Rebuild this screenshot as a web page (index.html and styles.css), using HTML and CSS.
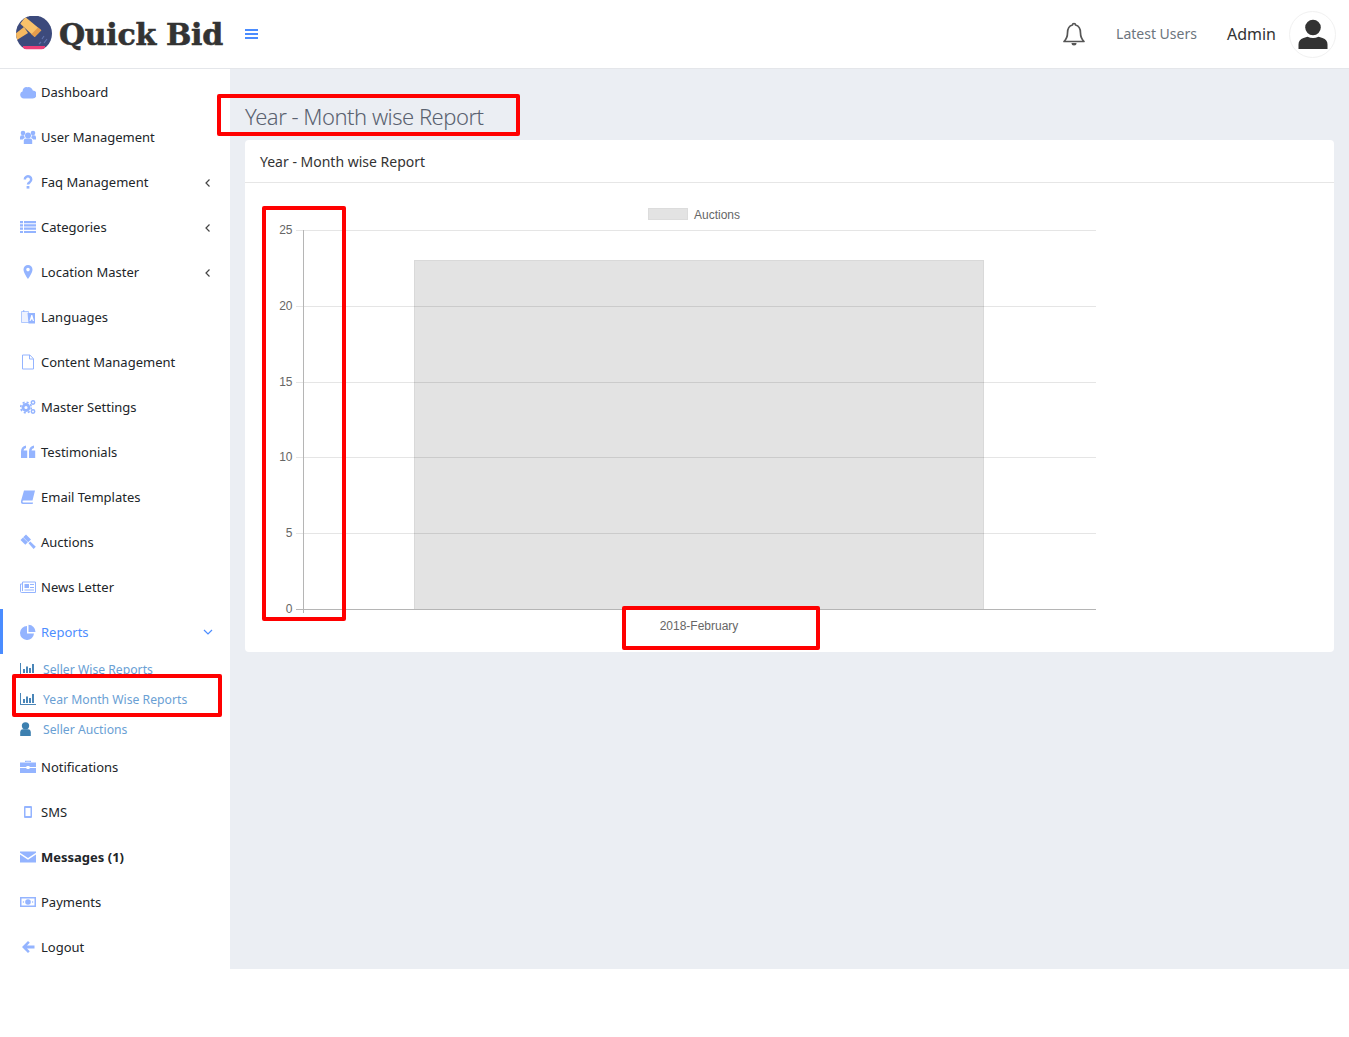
FILE: index.html
```html
<!DOCTYPE html>
<html lang="en">
<head>
    <meta charset="UTF-8">
    <title>Year - Month wise Report</title>
    <link rel="stylesheet" href="styles.css">
</head>
<body>
    <svg class="icon-defs" width="0" height="0">
        <symbol id="i-cloud" viewBox="0 0 16 16"><path d="M3.800 14.500a3.700 3.700 0 0 1-1.100-7.200A3.700 3.700 0 0 1 7.400 3.200 4.300 4.300 0 0 1 12.800 6.500 4 4 0 0 1 12.200 14.500z"/></symbol>
        <symbol id="i-users" viewBox="0 0 16 16"><circle cx="8" cy="6.500" r="3"/><circle cx="3" cy="4" r="2.300"/><circle cx="13" cy="4" r="2.300"/><path d="M3.800 15v-3.600Q3.800 9.500 6 9.500h4q2.200 0 2.200 1.900V15z"/><path d="M0 10.500V8.300q0-2 2-2h2.300a4 4 0 0 0 .5 2.600Q3 9.600 2.800 10.500zM16 10.500V8.300q0-2-2-2h-2.300a4 4 0 0 1-.5 2.600q1.800.7 2 1.600z"/></symbol>
        <symbol id="i-question" viewBox="0 0 16 16"><path d="M4.800 5.500a3.200 3.200 0 1 1 4.900 2.700C8.500 9 8 9.400 8 10.500" fill="none" stroke="currentColor" stroke-width="2.500"/><rect x="6.600" y="12" width="2.800" height="2.600"/></symbol>
        <symbol id="i-list" viewBox="0 0 16 16"><path d="M0 2h3v2.200H0zM4 2h12v2.200H4zM0 5.300h3v2.200H0zM4 5.300h12v2.200H4zM0 8.600h3v2.200H0zM4 8.600h12v2.200H4zM0 11.900h3v2.200H0zM4 11.900h12v2.200H4z"/></symbol>
        <symbol id="i-pin" viewBox="0 0 16 16"><path fill-rule="evenodd" d="M8 1a4.500 4.500 0 0 0-4.500 4.500C3.500 9 8 15 8 15s4.500-6 4.500-9.500A4.500 4.500 0 0 0 8 1zm0 2.800a1.800 1.800 0 1 1 0 3.600 1.800 1.800 0 0 1 0-3.600z"/></symbol>
        <symbol id="i-language" viewBox="0 0 16 16"><path d="M1.500 2.500h7l1 11h-8z" fill="#eef2ff" stroke="currentColor" stroke-width=".7"/><path d="M7.500 4H15v10.500H8.500z"/><path d="M9.500 12l1.800-6h1l1.700 6h-1.200l-.4-1.500h-1.400l-.4 1.500z" fill="#fff"/><path d="M3 1l2 1-2 1z"/></symbol>
        <symbol id="i-file" viewBox="0 0 16 16"><path d="M2.500 1h7.300l3.700 3.700V15h-11z M9.500 1v4h4" fill="none" stroke="currentColor" stroke-width="1"/></symbol>
        <symbol id="i-cogs" viewBox="0 0 16 16"><circle cx="6" cy="8.500" r="3" fill="none" stroke="currentColor" stroke-width="2.800"/><circle cx="6" cy="8.500" r="5.300" fill="none" stroke="currentColor" stroke-width="1.600" stroke-dasharray="2.100 2.060"/><circle cx="13" cy="3.500" r="1.700" fill="none" stroke="currentColor" stroke-width="1.500"/><circle cx="13" cy="12.500" r="1.700" fill="none" stroke="currentColor" stroke-width="1.500"/></symbol>
        <symbol id="i-quote" viewBox="0 0 16 16"><path d="M1 7.500Q1 2.500 6 1.500V4Q3.500 4.500 3.500 6.500H7.200V14H1zM9 7.500q0-5 5-6V4q-2.500.5-2.500 2.500h3.700V14H9z"/></symbol>
        <symbol id="i-book" viewBox="0 0 16 16"><path d="M4 1.500h11l-2.500 10H3.500q-1 0-1 1t1 1h9.500l-.3 1.500H3q-2.500 0-2-3z"/></symbol>
        <symbol id="i-gavel" viewBox="0 0 16 16"><path d="M6 .5l5 5-2.800 2.800-5-5zM8.500 9.200l1.800-1.800 5.500 5.300-2.200 2.200z"/><path d="M.5 6L3 3.500l4.800 4.800-2.500 2.500z"/></symbol>
        <symbol id="i-news" viewBox="0 0 16 16"><path d="M2.500 3h13v10.500H1.500Q.500 13.500.500 12.500V5h2zM2.500 3v9" fill="none" stroke="currentColor" stroke-width="1"/><path d="M4.500 5h4.500v4H4.500zM10 5h4v1h-4zM10 8h4v1h-4zM4.500 10.500H14v1H4.500z"/></symbol>
        <symbol id="i-pie" viewBox="0 0 16 16"><path d="M7 2a7 7 0 1 0 7 7.500H7z"/><path d="M8.500 .8A7 7 0 0 1 15.500 8H8.500z"/></symbol>
        <symbol id="i-bars" viewBox="0 0 16 16"><path d="M0 2h1v11h15v1H0z"/><path d="M3 8h2v4H3zM6 5.500h2V12H6zM9 7h2v5H9zM12 3h2v9h-2z"/></symbol>
        <symbol id="i-user" viewBox="2.500 .5 11 14.500"><circle cx="8" cy="4.500" r="3.800"/><path d="M2.500 15v-3.500q0-3.500 3-3.500h5q3 0 3 3.500V15z"/></symbol>
        <symbol id="i-case" viewBox="0 0 16 16"><path d="M5 3V1.800h6V3h-1.200v-.2H6.200V3z"/><path d="M0 3.500h16V8H9.500v-1h-3v1H0zM0 9h6.500v1h3V9H16v5H0z"/></symbol>
        <symbol id="i-mobile" viewBox="0 0 16 16"><path fill-rule="evenodd" d="M5 2h6q1 0 1 1v10q0 1-1 1H5q-1 0-1-1V3q0-1 1-1zm.5 2v8h5V4z"/></symbol>
        <symbol id="i-mail" viewBox="0 0 16 16"><path d="M0 2.500h16v1.200L8 9 0 3.700zM0 5.500L8 10.700 16 5.500V13.500H0z"/></symbol>
        <symbol id="i-money" viewBox="0 0 16 16"><path fill-rule="evenodd" d="M0 3h16v10H0zm1.500 1.500v7h13v-7z"/><circle cx="8" cy="8" r="2.800"/><circle cx="3.400" cy="8" r=".7"/><circle cx="12.600" cy="8" r=".7"/></symbol>
        <symbol id="i-back" viewBox="0 0 16 16"><path d="M8 2l1.800 1.800L7 6.500h7.500v3H7l2.800 2.700L8 14 2 8z"/></symbol>
    </svg>

    <div class="page">
        <header class="topbar">
            <a class="brand">
                <svg class="brand-logo" viewBox="0 0 36 36" width="36" height="36">
                    <clipPath id="logo-clip"><circle cx="18" cy="17.500" r="18"/></clipPath>
                    <g clip-path="url(#logo-clip)">
                        <rect width="36" height="33" fill="#3c4a7c"/>
                        <rect x="7" y="30" width="22" height="3.500" fill="#ec3f78"/>
                        <rect y="33.500" width="36" height="3" fill="#fff"/>
                        <path d="M28 20l-2 3M31 23l-3 4M25 26l-2 2" stroke="#5f71ad" stroke-width="1.200" fill="none"/>
                        <path d="M8 11l4 6L1 24l-2-6z" fill="#f5b860"/>
                        <path d="M9.300 1l16 13.300-6.600 6.700L4.300 7.700z" fill="#f9c26a"/>
                        <path d="M22 11.400l3.300 2.900-6.600 6.700-3.400-2.800z" fill="#e59c4c"/>
                    </g>
                </svg>
                <span class="brand-name">Quick Bid</span>
            </a>
            <div class="burger"><span></span><span></span><span></span></div>
            <div class="topbar-right">
                <svg class="bell" viewBox="0 0 24 26" width="24" height="26">
                    <path d="M12 2.500a1.500 1.500 0 0 1 1.500 1.500c4 1 5 4 5 8 0 4 1 6 3.500 8.500H2C4.500 18 5.500 16 5.500 12c0-4 1-7 5-8A1.500 1.500 0 0 1 12 2.500z" fill="none" stroke="#555" stroke-width="1.700" stroke-linejoin="round"/>
                    <path d="M9.500 22a2.500 2.500 0 0 0 5 0z" fill="#555"/>
                </svg>
                <a class="latest">Latest Users</a>
                <span class="admin">Admin</span>
                <div class="avatar">
                    <svg viewBox="0 0 32 32" width="32" height="32">
                        <circle cx="16" cy="9.500" r="7.800" fill="#333"/>
                        <path d="M1.500 31v-4.500q0-5 5-6.500l4-1.300q5.500 2.600 11 0l4 1.300q5 1.500 5 6.500V31z" fill="#333"/>
                    </svg>
                </div>
            </div>
        </header>

        <div class="layout">
            <nav class="sidebar">
                <ul class="menu">
                    <li class="menu-item"><svg class="ico"><use href="#i-cloud"/></svg>Dashboard</li>
                    <li class="menu-item"><svg class="ico"><use href="#i-users"/></svg>User Management</li>
                    <li class="menu-item"><svg class="ico"><use href="#i-question"/></svg>Faq Management<svg class="caret" viewBox="0 0 8 10"><path d="M5.500 1.500L2 5l3.500 3.500"/></svg></li>
                    <li class="menu-item"><svg class="ico"><use href="#i-list"/></svg>Categories<svg class="caret" viewBox="0 0 8 10"><path d="M5.500 1.500L2 5l3.500 3.500"/></svg></li>
                    <li class="menu-item"><svg class="ico"><use href="#i-pin"/></svg>Location Master<svg class="caret" viewBox="0 0 8 10"><path d="M5.500 1.500L2 5l3.500 3.500"/></svg></li>
                    <li class="menu-item"><svg class="ico"><use href="#i-language"/></svg>Languages</li>
                    <li class="menu-item"><svg class="ico"><use href="#i-file"/></svg>Content Management</li>
                    <li class="menu-item"><svg class="ico"><use href="#i-cogs"/></svg>Master Settings</li>
                    <li class="menu-item"><svg class="ico"><use href="#i-quote"/></svg>Testimonials</li>
                    <li class="menu-item"><svg class="ico"><use href="#i-book"/></svg>Email Templates</li>
                    <li class="menu-item"><svg class="ico"><use href="#i-gavel"/></svg>Auctions</li>
                    <li class="menu-item"><svg class="ico"><use href="#i-news"/></svg>News Letter</li>
                    <li class="menu-item active"><svg class="ico"><use href="#i-pie"/></svg>Reports<svg class="caret down" viewBox="0 0 12 8"><path d="M2 2l4 4 4-4"/></svg></li>
                    <li class="sub-item"><svg class="sub-ico"><use href="#i-bars"/></svg>Seller Wise Reports</li>
                    <li class="sub-item"><svg class="sub-ico"><use href="#i-bars"/></svg>Year Month Wise Reports</li>
                    <li class="sub-item"><svg class="sub-ico user"><use href="#i-user"/></svg>Seller Auctions</li>
                    <li class="menu-item"><svg class="ico"><use href="#i-case"/></svg>Notifications</li>
                    <li class="menu-item"><svg class="ico"><use href="#i-mobile"/></svg>SMS</li>
                    <li class="menu-item unread"><svg class="ico"><use href="#i-mail"/></svg>Messages (1)</li>
                    <li class="menu-item"><svg class="ico"><use href="#i-money"/></svg>Payments</li>
                    <li class="menu-item"><svg class="ico"><use href="#i-back"/></svg>Logout</li>
                </ul>
            </nav>

            <main class="content">
                <h1 class="page-title">Year - Month wise Report</h1>
                <section class="card">
                    <div class="card-head">Year - Month wise Report</div>
                    <svg class="chart" viewBox="245 183 1089 469" width="1089" height="469">
                        <rect class="legend-box" x="648.500" y="208.500" width="39" height="11"/>
                        <text class="chart-text" x="694" y="219">Auctions</text>

                        <rect class="bar" x="414.500" y="260.500" width="569" height="349"/>

                        <path class="grid" d="M296 230.500H1096M296 306.500H1096M296 382.500H1096M296 457.500H1096M296 533.500H1096"/>
                        <path class="axis" d="M303.500 230V613M296 609.500H1096"/>

                        <text class="chart-text y-label" x="292.500" y="234">25</text>
                        <text class="chart-text y-label" x="292.500" y="310">20</text>
                        <text class="chart-text y-label" x="292.500" y="386">15</text>
                        <text class="chart-text y-label" x="292.500" y="461">10</text>
                        <text class="chart-text y-label" x="292.500" y="537">5</text>
                        <text class="chart-text y-label" x="292.500" y="613">0</text>
                        <text class="chart-text x-label" x="699" y="630">2018-February</text>
                    </svg>
                </section>
            </main>
        </div>

        <!-- red boxes drawn over the screenshot -->
        <div class="mark mark-title"></div>
        <div class="mark mark-yaxis"></div>
        <div class="mark mark-xaxis"></div>
        <div class="mark mark-menu"></div>
    </div>
</body>
</html>
```

FILE: styles.css
```css
*{
    margin:0px;
    padding:0px;
    box-sizing: border-box;
}
body{
    font-family: "Noto Sans", "Open Sans", Arial, sans-serif;
    font-size:14px;
    background-color: #fff;
    color: #212529;
}
.icon-defs{
    position: absolute;
}
.page{
    position: relative;
    width:100%;
    height: 1037px;
    overflow: hidden;
}
.topbar{
    display: flex;
    align-items: center;
    height: 69px;
    padding-left: 16px;
    background-color: #fff;
    border-bottom: 1px solid #e4e6ea;
}
.brand{
    display: flex;
    align-items: center;
    width: 229px;
}
.brand-logo{
    flex: none;
}
.brand-name{
    margin-left: 7px;
    font-family: "DejaVu Serif", "Liberation Serif", serif;
    font-weight: 700;
    font-size: 30px;
    letter-spacing: -0.3px;
    -webkit-text-stroke: 0.6px #333;
    color: #333;
    white-space: nowrap;
}
.burger{
    display: flex;
    flex-direction: column;
    gap: 2px;
    width: 13px;
}
.burger span{
    height: 2px;
    background-color: #4a8cff;
}
.topbar-right{
    display: flex;
    align-items: center;
    margin-left: auto;
    padding-right: 13px;
}
.bell{
    margin-right: 30px;
}
.latest{
    margin-right: 30px;
    margin-bottom: 2px;
    color: #6c757d;
    font-size: 14px;
}
.admin{
    margin-right: 13px;
    font-size: 16px;
    color: #333;
}
.avatar{
    display: flex;
    align-items: center;
    justify-content: center;
    width: 47px;
    height: 47px;
    border: 1px solid #f1f1f1;
    border-radius: 50%;
}
.layout{
    display: flex;
    height: 900px;
}
.sidebar{
    flex: none;
    width: 230px;
    background-color: #fff;
}
.menu{
    list-style: none;
}
.menu-item{
    display: flex;
    align-items: center;
    height: 45px;
    padding: 0px 16px 0px 20px;
    font-size: 13px;
    color: #212529;
    white-space: nowrap;
}
.menu-item.active{
    color: #4d8dff;
    box-shadow: inset 3px 0px 0px #4a8cff;
}
.menu-item.unread{
    font-weight: 700;
}
.ico{
    flex: none;
    width: 16px;
    height: 16px;
    margin-right: 5px;
    fill: #94b4ff;
    color: #94b4ff;
}
.caret{
    width: 8px;
    height: 10px;
    margin-left: auto;
    margin-right: 2px;
    margin-top: 2px;
    fill: none;
    stroke: #444;
    stroke-width: 1.2;
}
.caret.down{
    width: 12px;
    height: 8px;
    margin-right: 0px;
    margin-top: 0px;
    stroke: #4d8dff;
}
.sub-item{
    display: flex;
    align-items: center;
    height: 30px;
    padding-left: 20px;
    font-size: 12.200px;
    color: #6aa0d4;
    white-space: nowrap;
}
.sub-ico{
    flex: none;
    width: 16px;
    height: 16px;
    margin-right: 7px;
    fill: #4a86b8;
    color: #4a86b8;
}
.sub-ico.user{
    width: 11px;
    height: 14px;
    margin-right: 12px;
    fill: #3d80b0;
}
.content{
    flex: 1;
    padding: 32px 15px 0px 15px;
    background-color: #ebeef3;
}
.page-title{
    height: 39px;
    font-weight: 300;
    font-size: 22px;
    letter-spacing: -0.5px;
    line-height: 30px;
    color: #5a6270;
}
.card{
    height: 512px;
    background-color: #fff;
    border-radius: 4px;
    overflow: hidden;
}
.card-head{
    height: 43px;
    padding-left: 15px;
    line-height: 43px;
    font-size: 14px;
    color: #333;
    border-bottom: 1px solid #e6e6e6;
}
.chart{
    display: block;
}
.legend-box{
    fill: #e3e3e3;
    stroke: #dcdcdc;
}
.bar{
    fill: #e3e3e3;
    stroke: #d9d9d9;
}
.grid{
    fill: none;
    stroke: #000;
    stroke-opacity: 0.1;
}
.axis{
    fill: none;
    stroke: #b5b5b5;
}
.chart-text{
    font-family: "Liberation Sans", Arial, sans-serif;
    font-size: 12px;
    fill: #666;
}
.y-label{
    text-anchor: end;
}
.x-label{
    text-anchor: middle;
}
.mark{
    position: absolute;
    border: 4px solid #f00;
    border-radius: 2px;
}
.mark-title{
    left: 217px;
    top: 94px;
    width: 303px;
    height: 42px;
}
.mark-yaxis{
    left: 262px;
    top: 206px;
    width: 84px;
    height: 415px;
}
.mark-xaxis{
    left: 622px;
    top: 606px;
    width: 198px;
    height: 44px;
}
.mark-menu{
    left: 12px;
    top: 674px;
    width: 210px;
    height: 43px;
}
```
